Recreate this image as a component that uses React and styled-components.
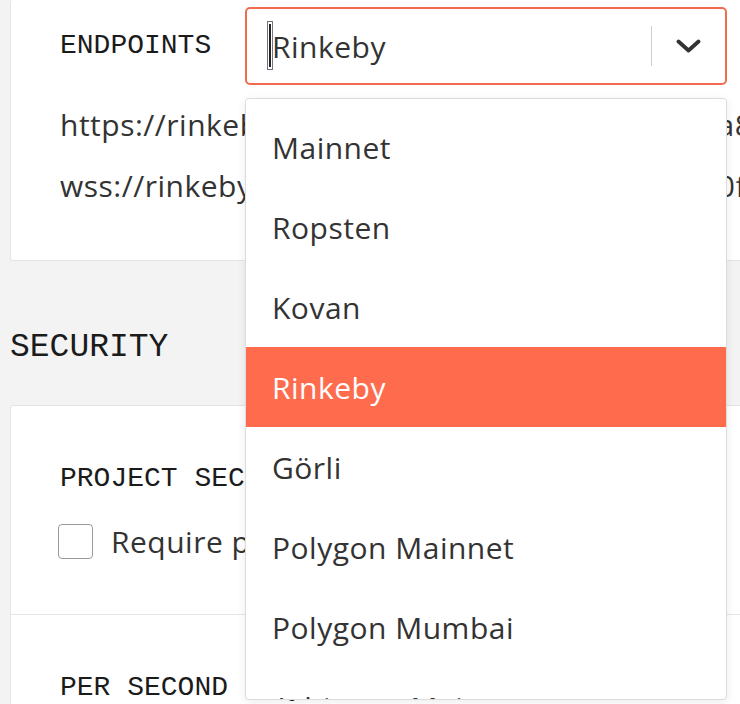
import React from "react";
import styled, { createGlobalStyle } from "styled-components";

const GlobalStyle = createGlobalStyle`
	html, body {
		margin: 0;
		padding: 0;
		background: #f3f3f3;
		overflow: hidden;
	}
`;

const Page = styled.div`
	width: 740px;
	height: 704px;
	overflow: hidden;
	padding-left: 10px;
	box-sizing: border-box;
	font-family: "Open Sans", "Noto Sans", sans-serif;
	color: #333;
`;

const Card = styled.div`
	background: #fff;
	border: 1px solid #e4e4e4;
	border-top-color: ${(p) => (p.$flushTop ? "transparent" : "#e4e4e4")};
	border-radius: 3px;
	margin-right: -40px;
`;

const Section = styled.div`
	padding: ${(p) => p.$pad || "53px 49px 52px"};
	border-bottom: ${(p) => (p.$divider ? "1px solid #e4e4e4" : "none")};
`;

const Label = styled.div`
	font-family: "Liberation Mono", monospace;
	font-size: 28px;
	line-height: 40px;
	color: #1b1b1b;
	white-space: nowrap;
`;

const Heading = styled.h2`
	font-family: "Liberation Mono", monospace;
	font-weight: 400;
	font-size: 33px;
	line-height: 40px;
	color: #1b1b1b;
	margin: 67px 0 37px 0;
`;

const EndpointRow = styled.div`
	display: flex;
	align-items: center;
`;

const EndpointLabel = styled(Label)`
	width: 185px;
	flex: none;
`;

const SelectWrap = styled.div`
	position: relative;
	width: 482px;
	flex: none;
`;

const SelectBox = styled.div`
	position: relative;
	display: flex;
	align-items: center;
	height: 78px;
	box-sizing: border-box;
	border: 2px solid #f26b50;
	border-radius: 5px;
	background: #fff;
`;

const SelectValue = styled.div`
	flex: 1;
	padding-left: 25px;
	font-size: 30px;
	letter-spacing: 0.5px;
	color: #333;
`;

const Separator = styled.span`
	width: 1px;
	height: 40px;
	background: #cfcfcf;
`;

const Indicator = styled.div`
	width: 73px;
	display: flex;
	align-items: center;
	justify-content: center;
	color: #333;
`;

const IBeam = styled.span`
	position: absolute;
	left: 20px;
	top: 12px;
	width: 4px;
	height: 47px;
	border: 1.5px solid #6f7682;
	background: #fff;
	&::after {
		content: "";
		position: absolute;
		left: 1px;
		top: 2px;
		bottom: 2px;
		width: 2px;
		background: #222;
	}
`;

const Menu = styled.ul`
	position: absolute;
	left: 0;
	top: calc(100% + 13px);
	width: 100%;
	height: 602px;
	box-sizing: border-box;
	margin: 0;
	padding: 8px 0 0;
	list-style: none;
	background: #fff;
	border: 1px solid #dcdcdc;
	border-radius: 4px;
	box-shadow: 0 2px 10px rgba(0, 0, 0, 0.08);
	overflow: hidden;
	z-index: 5;
`;

const Option = styled.li`
	height: 80px;
	display: flex;
	align-items: center;
	padding-left: 26px;
	font-size: 30px;
	letter-spacing: 0.5px;
	color: ${(p) => (p.$active ? "#fff" : "#333")};
	background: ${(p) => (p.$active ? "#ff6b4d" : "transparent")};
`;

const Urls = styled.div`
	margin-top: 9px;
`;

const Url = styled.div`
	font-size: 30px;
	letter-spacing: 0.5px;
	line-height: 61px;
	color: #333;
	white-space: nowrap;
`;

const CheckRow = styled.label`
	display: flex;
	align-items: center;
	gap: 18px;
	margin-top: 22px;
	margin-left: -2px;
	font-size: 30px;
	letter-spacing: 0.5px;
	color: #333;
	white-space: nowrap;
`;

const Box = styled.span`
	width: 35px;
	height: 35px;
	box-sizing: border-box;
	border: 1.5px solid #9a9a9a;
	border-radius: 4px;
	background: #fff;
	flex: none;
`;

const networks = [
	"Mainnet",
	"Ropsten",
	"Kovan",
	"Rinkeby",
	"Görli",
	"Polygon Mainnet",
	"Polygon Mumbai",
	"Arbitrum Mainnet",
	"Arbitrum Rinkeby",
];

function Chevron() {
	return (
		<svg width="25" height="14" viewBox="0 0 25 14" fill="none">
			<path d="M2.5 2.5 L12.5 11.5 L22.5 2.5" stroke="currentColor" strokeWidth="3.8" strokeLinecap="round" strokeLinejoin="round" />
		</svg>
	);
}

function App() {
	const selected = "Rinkeby";
	return (
		<Page>
			<GlobalStyle />
			<Card $flushTop>
				<Section $pad="6px 49px 44px">
					<EndpointRow>
						<EndpointLabel>ENDPOINTS</EndpointLabel>
						<SelectWrap>
							<SelectBox>
								<SelectValue>{selected}</SelectValue>
								<Separator />
								<Indicator>
									<Chevron />
								</Indicator>
								<IBeam />
							</SelectBox>
							<Menu>
								{networks.map((n) => (
									<Option key={n} $active={n === selected}>{n}</Option>
								))}
							</Menu>
						</SelectWrap>
					</EndpointRow>
					<Urls>
						<Url>https://rinkeby.infura.io/v3/9aa3d95b3bc440fa8812</Url>
						<Url>wss://rinkeby.infura.io/ws/v3/9aa3d95b3bc440fa884e</Url>
					</Urls>
				</Section>
			</Card>

			<Heading>SECURITY</Heading>

			<Card>
				<Section $divider>
					<Label>PROJECT SECRET</Label>
					<CheckRow>
						<Box />
						Require project secret for all requests
					</CheckRow>
				</Section>
				<Section>
					<Label>PER SECOND REQUESTS RATE-LIMITING</Label>
				</Section>
			</Card>
		</Page>
	);
}

export default App;
